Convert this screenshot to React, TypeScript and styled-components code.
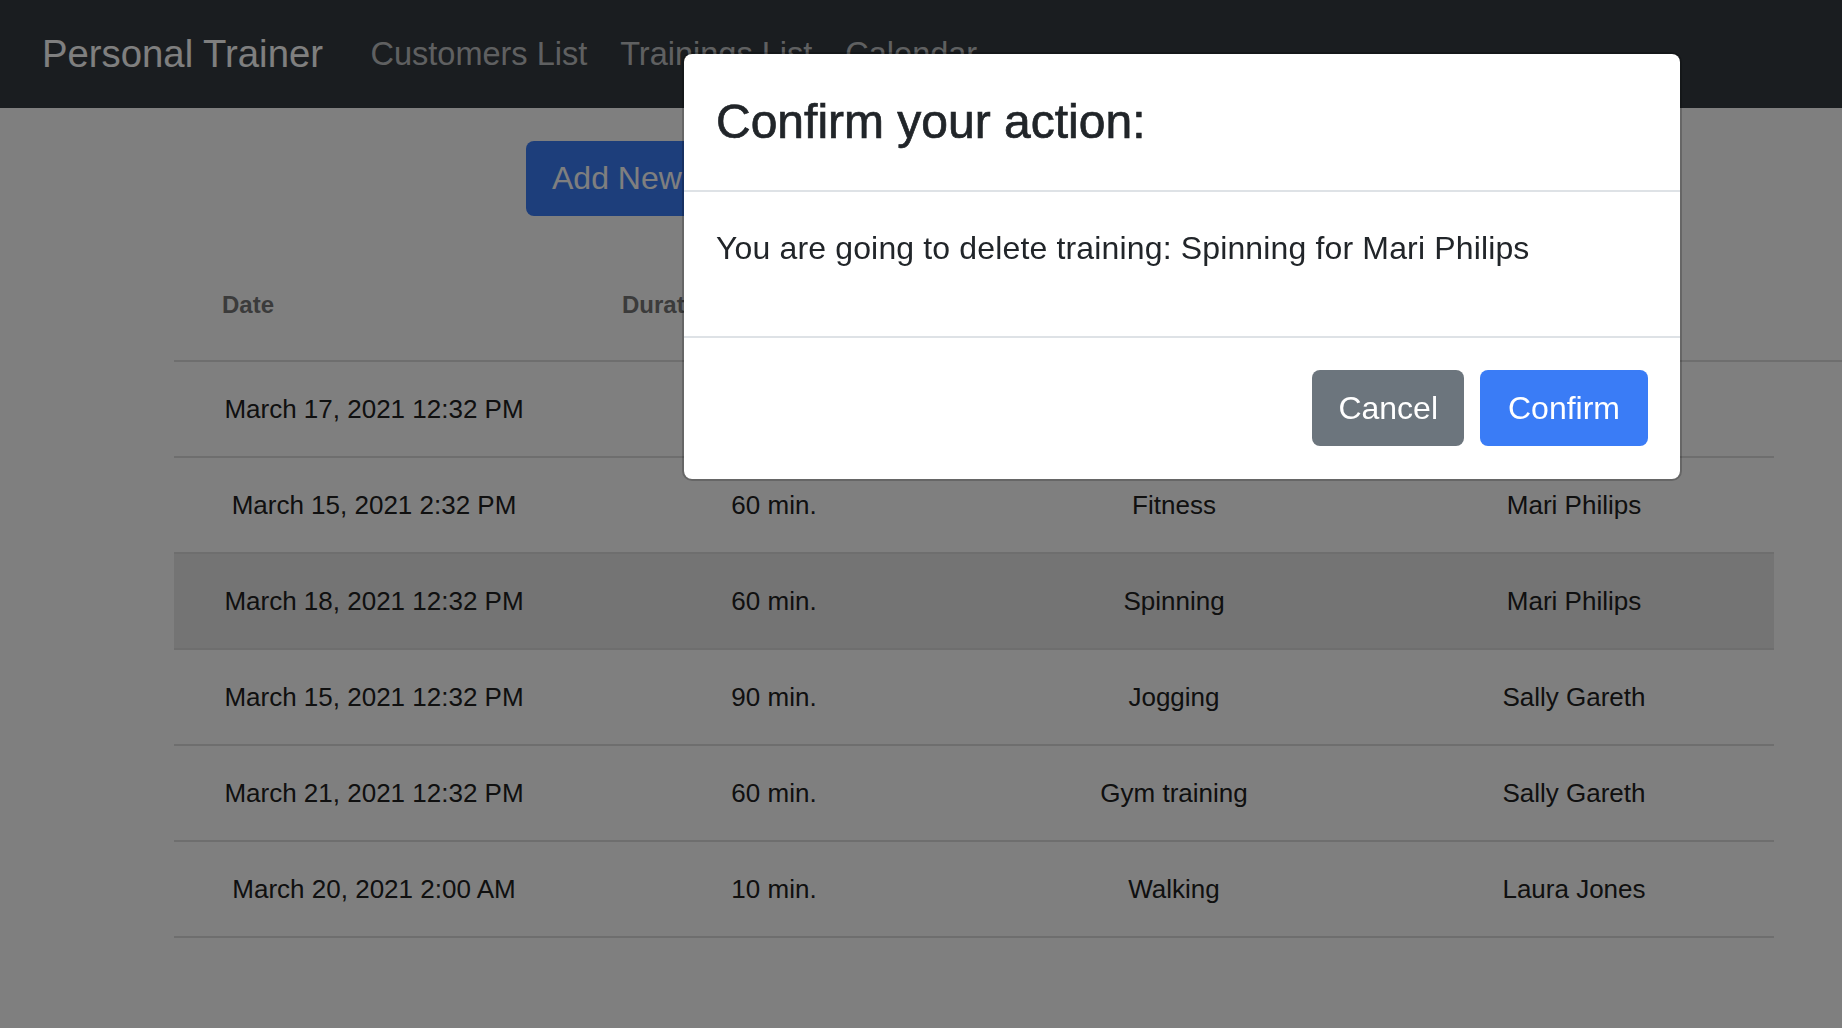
import React from "react";
import styled, { createGlobalStyle } from "styled-components";

type Training = {
    date: string;
    duration: string;
    activity: string;
    customer: string;
};

const trainings: Training[] = [
    { date: "March 17, 2021 12:32 PM", duration: "60 min.", activity: "Zumba", customer: "Mari Philips" },
    { date: "March 15, 2021 2:32 PM", duration: "60 min.", activity: "Fitness", customer: "Mari Philips" },
    { date: "March 18, 2021 12:32 PM", duration: "60 min.", activity: "Spinning", customer: "Mari Philips" },
    { date: "March 15, 2021 12:32 PM", duration: "90 min.", activity: "Jogging", customer: "Sally Gareth" },
    { date: "March 21, 2021 12:32 PM", duration: "60 min.", activity: "Gym training", customer: "Sally Gareth" },
    { date: "March 20, 2021 2:00 AM", duration: "10 min.", activity: "Walking", customer: "Laura Jones" },
];

const columns = ["Date", "Duration", "Activity", "Customer"];

export default function App() {
    return (
        <>
            <GlobalStyle />
            <Navbar>
                <Brand>Personal Trainer</Brand>
                <NavLink>Customers List</NavLink>
                <NavLink>Trainings List</NavLink>
                <NavLink>Calendar</NavLink>
            </Navbar>
            <Main>
                <Toolbar>
                    <AddButton>Add New Training</AddButton>
                </Toolbar>
                <Grid>
                    <HeaderRow>
                        {columns.map((c) => (
                            <HeaderCell key={c}>{c}</HeaderCell>
                        ))}
                    </HeaderRow>
                    {trainings.map((t, i) => (
                        <Row key={i} $selected={i === 2}>
                            <Cell>{t.date}</Cell>
                            <Cell>{t.duration}</Cell>
                            <Cell>{t.activity}</Cell>
                            <Cell>{t.customer}</Cell>
                        </Row>
                    ))}
                </Grid>
            </Main>

            <Backdrop />
            <Dialog>
                <DialogHeader>
                    <DialogTitle>Confirm your action:</DialogTitle>
                </DialogHeader>
                <DialogBody>
                    <p>You are going to delete training: Spinning for Mari Philips</p>
                </DialogBody>
                <DialogFooter>
                    <Button $variant="secondary">Cancel</Button>
                    <Button $variant="primary">Confirm</Button>
                </DialogFooter>
            </Dialog>
        </>
    );
}

const GlobalStyle = createGlobalStyle`
    html, body {
        margin: 0;
        padding: 0;
        background: #fff;
    }
    body {
        font-family: "Liberation Sans", Arial, sans-serif;
        overflow: hidden;
    }
    #root {
        min-height: 100vh;
    }
`;

const Navbar = styled.nav`
    height: 108px;
    box-sizing: border-box;
    background: #343a40;
    display: flex;
    align-items: center;
    padding: 0 32px 0 42px;
`;

const Brand = styled.a`
    font-size: 38.3px;
    line-height: 1.5;
    color: #fff;
    margin-right: 31px;
    white-space: nowrap;
`;

const NavLink = styled.a`
    font-size: 32.5px;
    line-height: 1.5;
    color: rgba(255, 255, 255, 0.7);
    padding: 0 16.5px;
    white-space: nowrap;
`;

const Main = styled.main`
    padding: 33px 0 0 174px;
`;

const Toolbar = styled.div`
    padding-left: 352px;
`;

const AddButton = styled.button`
    height: 75px;
    padding: 0 26px;
    border: none;
    border-radius: 8px;
    background: #3a7cf6;
    color: #fff;
    font-family: "Liberation Sans", Arial, sans-serif;
    font-size: 32px;
`;

const Grid = styled.div`
    margin-top: 34px;
`;

const HeaderRow = styled.div`
    display: grid;
    grid-template-columns: repeat(4, 400px);
    height: 112px;
    box-sizing: border-box;
    border-bottom: 2px solid #dcdcdc;
`;

const HeaderCell = styled.div`
    display: flex;
    align-items: center;
    padding-left: 48px;
    font-size: 24px;
    font-weight: bold;
    color: #777;
`;

const Row = styled.div<{ $selected?: boolean }>`
    display: grid;
    grid-template-columns: repeat(4, 400px);
    width: 1600px;
    height: 96px;
    box-sizing: border-box;
    border-bottom: 2px solid #dcdcdc;
    background: ${(p) => (p.$selected ? "#e8e8e8" : "transparent")};
`;

const Cell = styled.div`
    display: flex;
    align-items: center;
    justify-content: center;
    font-size: 26px;
    color: #212121;
`;

const Backdrop = styled.div`
    position: fixed;
    inset: 0;
    background: rgba(0, 0, 0, 0.5);
`;

const Dialog = styled.div`
    position: fixed;
    top: 52px;
    left: 682px;
    width: 1000px;
    box-sizing: border-box;
    background: #fff;
    border: 2px solid rgba(0, 0, 0, 0.2);
    border-radius: 10px;
    background-clip: padding-box;
    display: flex;
    flex-direction: column;
`;

const DialogHeader = styled.div`
    padding: 32px;
    border-bottom: 2px solid #dee2e6;
`;

const DialogTitle = styled.h4`
    margin: 0;
    font-size: 48px;
    line-height: 72px;
    font-weight: 500;
    color: #212529;
    -webkit-text-stroke: 0.7px #212529;
`;

const DialogBody = styled.div`
    padding: 32px;
    font-size: 32px;
    line-height: 48px;
    color: #212529;
    letter-spacing: 0.15px;

    p {
        margin: 0 0 32px;
    }
`;

const DialogFooter = styled.div`
    display: flex;
    justify-content: flex-end;
    align-items: center;
    gap: 16px;
    padding: 32px 32px 33px;
    border-top: 2px solid #dee2e6;
`;

const Button = styled.button<{ $variant: "primary" | "secondary" }>`
    height: 76px;
    padding: 0 ${(p) => (p.$variant === "primary" ? "28px" : "26px")};
    border: none;
    border-radius: 8px;
    font-family: "Liberation Sans", Arial, sans-serif;
    font-size: 32px;
    color: #fff;
    background: ${(p) => (p.$variant === "primary" ? "#3a7cf6" : "#6c757d")};
`;
